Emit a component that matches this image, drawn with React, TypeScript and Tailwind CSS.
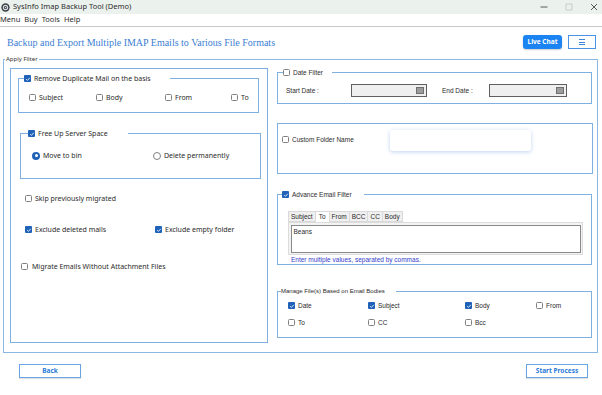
import React from "react";

// small checkbox drawn like the WinForms control
function Check({ on = false }: { on?: boolean }) {
  if (on) {
    return (
      <span className="inline-flex h-[7px] w-[7px] shrink-0 items-center justify-center rounded-[1px] bg-[#1f62b8]">
        <svg viewBox="0 0 8 8" className="h-[6px] w-[6px]">
          <path d="M1.6 4.3 L3.3 5.8 L6.4 2.4" fill="none" stroke="white" strokeWidth="1.1" />
        </svg>
      </span>
    );
  }
  return <span className="inline-block h-[7px] w-[7px] shrink-0 rounded-[1.5px] border border-[#808080] bg-white" />;
}

function Radio({ on = false }: { on?: boolean }) {
  if (on) {
    return (
      <span className="inline-flex h-[8px] w-[8px] shrink-0 items-center justify-center rounded-full bg-[#1f62b8]">
        <span className="h-[3px] w-[3px] rounded-full bg-white" />
      </span>
    );
  }
  return <span className="inline-block h-[8px] w-[8px] shrink-0 rounded-full border border-[#808080] bg-white" />;
}

function Opt({ on, label, className = "" }: { on?: boolean; label: string; className?: string }) {
  return (
    <div className={`flex h-[9px] items-center gap-[3px] ${className}`}>
      <Check on={on} />
      <span className="whitespace-nowrap">{label}</span>
    </div>
  );
}

function DateBox({ w }: { w: string }) {
  return (
    <div className={`flex h-[13px] ${w} items-center justify-end border border-[#5f5f5f] bg-[#efefef] pr-[2px]`}>
      <span className="h-[7px] w-[8px] border border-[#6f6f6f] bg-[#9c9c9c]" />
    </div>
  );
}

export default function App() {
  return (
    <div className="h-[395px] w-[602px] overflow-hidden bg-white font-['Noto_Sans',sans-serif] text-[#2b2b2b]">
      {/* title bar */}
      <div className="flex h-[14px] items-center bg-[#ebf2ee] pl-[1px] pr-[4px]">
        <svg viewBox="0 0 10 10" className="h-[9px] w-[9px]">
          <circle cx="5" cy="5" r="4.6" fill="#3b3f44" />
          <circle cx="5" cy="5" r="2.4" fill="none" stroke="#d8dde2" strokeWidth="1.2" />
          <circle cx="5" cy="5" r="0.9" fill="#d8dde2" />
        </svg>
        <span className="ml-[3px] text-[7.5px] leading-none">SysInfo Imap Backup Tool (Demo)</span>
        <div className="ml-auto flex items-center gap-[17px]">
          <svg viewBox="0 0 8 8" className="h-[8px] w-[8px]">
            <path d="M0.5 4 H7.5" stroke="#333" strokeWidth="0.8" />
          </svg>
          <svg viewBox="0 0 8 8" className="h-[8px] w-[8px]">
            <rect x="1" y="1" width="6" height="6" fill="none" stroke="#c4c4c4" strokeWidth="0.8" />
          </svg>
          <svg viewBox="0 0 8 8" className="h-[8px] w-[8px]">
            <path d="M1 1 L7 7 M7 1 L1 7" stroke="#333" strokeWidth="0.8" />
          </svg>
        </div>
      </div>

      {/* menu bar */}
      <div className="flex h-[13px] items-center gap-[4px] border-b border-[#c9c9c9] text-[7.5px] leading-none">
        <span>Menu</span>
        <span>Buy</span>
        <span>Tools</span>
        <span>Help</span>
      </div>

      {/* header */}
      <div className="flex h-[28px] items-center justify-between pl-[7px] pr-[6px] pt-[2px]">
        <h1 className="font-['Liberation_Serif',serif] text-[10px] text-[#3c80d3]">
          Backup and Export Multiple IMAP Emails to Various File Formats
        </h1>
        <div className="flex items-center gap-[6px]">
          <button className="h-[14px] w-[39px] rounded-[3px] bg-[#1b84f2] text-[6.5px] font-bold text-white shadow-[0_1px_2px_rgba(0,0,0,0.2)]">
            Live Chat
          </button>
          <button className="flex h-[14px] w-[28px] flex-col items-center justify-center gap-[1.5px] border border-[#4a92e4] bg-white">
            <span className="h-[0.8px] w-[6px] bg-[#3b86dc]" />
            <span className="h-[0.8px] w-[6px] bg-[#3b86dc]" />
            <span className="h-[0.8px] w-[6px] bg-[#3b86dc]" />
          </button>
        </div>
      </div>

      {/* Apply Filter group */}
      <fieldset className="mx-[3px] h-[298px] w-[595px] border border-[#8ab7e4]">
        <legend className="ml-[1px] px-[1px] text-[6px] leading-[9px] text-[#333]">Apply Filter</legend>
        <div className="flex pl-[6px] pt-[4px]">
          {/* left panel */}
          <div className="flex h-[275px] w-[258px] flex-col border border-[#7eb0e2] text-[7px] leading-[9px]">
            <fieldset className="ml-[7px] mt-[5px] h-[39px] w-[241px] border border-[#7eb0e2]">
              <legend className="ml-[5px] flex items-center gap-[3px] pr-[19px]">
                <Check on />
                <span>Remove Duplicate Mail on the basis</span>
              </legend>
              <div className="mt-[10px] flex pl-[10px]">
                <Opt label="Subject" className="w-[67px]" />
                <Opt label="Body" className="w-[69px]" />
                <Opt label="From" className="w-[66px]" />
                <Opt label="To" />
              </div>
            </fieldset>

            <fieldset className="ml-[9px] mt-[16px] h-[50px] w-[241px] border border-[#7eb0e2]">
              <legend className="ml-[7px] flex items-center gap-[3px] pr-[20px]">
                <Check on />
                <span>Free Up Server Space</span>
              </legend>
              <div className="mt-[13px] flex pl-[11px]">
                <div className="flex h-[9px] w-[121px] items-center gap-[3px]">
                  <Radio on />
                  <span>Move to bin</span>
                </div>
                <div className="flex h-[9px] items-center gap-[3px]">
                  <Radio />
                  <span>Delete permanently</span>
                </div>
              </div>
            </fieldset>

            <Opt label="Skip previously migrated" className="ml-[14px] mt-[15px]" />
            <div className="ml-[14px] mt-[22px] flex">
              <Opt on label="Exclude deleted mails" className="w-[130px]" />
              <Opt on label="Exclude empty folder" />
            </div>
            <div className="ml-[10px] mt-[28px] flex h-[9px] items-center gap-[4px]">
              <Check />
              <span>Migrate Emails Without Attachment Files</span>
            </div>
          </div>

          {/* right column */}
          <div className="ml-[9px] flex w-[316px] flex-col font-['Liberation_Sans',sans-serif] text-[6.5px] leading-[9px]">
            <fieldset className="h-[36px] w-[315px] border border-[#7eb0e2]">
              <legend className="ml-[5px] flex items-center gap-[3px] pr-[9px]">
                <Check />
                <span>Date Filter</span>
              </legend>
              <div className="mt-[7px] flex items-center pl-[8px]">
                <span className="w-[65px]">Start Date :</span>
                <DateBox w="w-[76px]" />
                <span className="ml-[15px] w-[47px]">End Date :</span>
                <DateBox w="w-[78px]" />
              </div>
            </fieldset>

            <div className="mt-[19px] flex h-[51px] w-[316px] items-start border border-[#7eb0e2]">
              <div className="flex w-[112px] items-center gap-[3px] pl-[4px] pt-[11px]">
                <Check />
                <span>Custom Folder Name</span>
              </div>
              <div className="mt-[6px] h-[21px] w-[141px] rounded-[3px] bg-white shadow-[0_1px_4px_rgba(70,130,210,0.35)]" />
            </div>

            <fieldset className="mt-[16px] h-[75px] w-[315px] border border-[#7eb0e2]">
              <legend className="ml-[4px] flex items-center gap-[3px] pr-[12px]">
                <Check on />
                <span>Advance Email Filter</span>
              </legend>
              <div className="ml-[10px] mt-[12px] w-[295px]">
                <div className="flex items-end text-[6.5px] leading-[8px]">
                  <span className="border border-[#d9d9d9] bg-[#f0f0f0] px-[2px] py-[0.5px]">Subject</span>
                  <span className="mx-[-1px] border border-b-0 border-[#d9d9d9] bg-white px-[3px] pb-[1.5px] pt-[0.5px]">To</span>
                  <span className="border border-[#d9d9d9] bg-[#f0f0f0] px-[2px] py-[0.5px]">From</span>
                  <span className="border border-l-0 border-[#d9d9d9] bg-[#f0f0f0] px-[2px] py-[0.5px]">BCC</span>
                  <span className="border border-l-0 border-[#d9d9d9] bg-[#f0f0f0] px-[2px] py-[0.5px]">CC</span>
                  <span className="border border-l-0 border-[#d9d9d9] bg-[#f0f0f0] px-[2px] py-[0.5px]">Body</span>
                </div>
                <div className="border border-[#dcdcdc] bg-[#f3f3f3] p-[1.5px]">
                  <div className="h-[28px] border border-[#8a8a8a] bg-white px-[2px] pt-[1px] text-[6.5px]">Beans</div>
                </div>
                <p className="mt-[0.5px] pl-[3px] text-[6.5px] leading-[8px] text-[#3340cc]">
                  Enter multiple values, separated by commas.
                </p>
              </div>
            </fieldset>

            <fieldset className="mt-[22px] h-[51px] w-[315px] border border-[#7eb0e2]">
              <legend className="ml-[3px] pr-[11px] text-[6px]">Manage File(s) Based on Email Bodies</legend>
              <div className="mt-[5px] flex pl-[10px]">
                <Opt on label="Date" className="w-[80px]" />
                <Opt on label="Subject" className="w-[97px]" />
                <Opt on label="Body" className="w-[71px]" />
                <Opt label="From" />
              </div>
              <div className="mt-[8px] flex pl-[10px]">
                <Opt label="To" className="w-[80px]" />
                <Opt label="CC" className="w-[97px]" />
                <Opt label="Bcc" />
              </div>
            </fieldset>
          </div>
        </div>
      </fieldset>

      {/* footer buttons */}
      <div className="mt-[11px] flex justify-between pl-[19px] pr-[14px]">
        <button className="h-[14px] w-[62px] border border-[#6aa4e2] bg-white text-[6.5px] font-bold text-[#2a7ad8] shadow-[0_1px_1px_rgba(0,0,0,0.12)]">
          Back
        </button>
        <button className="h-[14px] w-[62px] border border-[#6aa4e2] bg-white text-[6.5px] font-bold text-[#2a7ad8] shadow-[0_1px_1px_rgba(0,0,0,0.12)]">
          Start Process
        </button>
      </div>
    </div>
  );
}
